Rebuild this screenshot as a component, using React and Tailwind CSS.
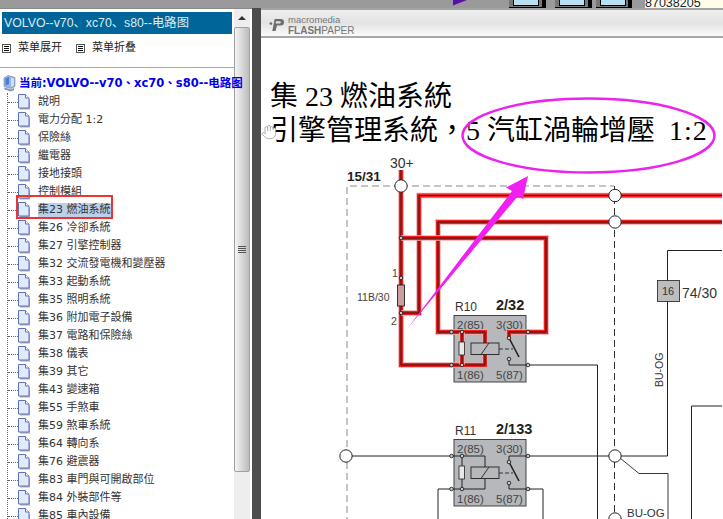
import { Hand } from 'lucide-react';

const treeItems = [
  '說明',
  '電力分配 1:2',
  '保險絲',
  '繼電器',
  '接地接頭',
  '控制模組',
  '集23 燃油系統',
  '集26 冷卻系統',
  '集27 引擎控制器',
  '集32 交流發電機和變壓器',
  '集33 起動系統',
  '集35 照明系統',
  '集36 附加電子設備',
  '集37 電路和保險絲',
  '集38 儀表',
  '集39 其它',
  '集43 變速箱',
  '集55 手煞車',
  '集59 煞車系統',
  '集64 轉向系',
  '集76 避震器',
  '集83 車門與可開啟部位',
  '集84 外裝部件等',
  '集85 車內設備',
];

function MenuIcon() {
  return (
    <svg width="9" height="9" viewBox="0 0 9 9" className="shrink-0">
      <rect x="0.5" y="0.5" width="8" height="8" fill="#fff" stroke="#555" />
      <path d="M2 2.5h5M2 4.5h5M2 6.5h5" stroke="#111" />
    </svg>
  );
}

function DocIcon() {
  return (
    <svg width="13" height="16" viewBox="0 0 13 16" className="shrink-0">
      <path d="M2 2.5h6l4 4v9h-10z" fill="#a9a9b8" />
      <path d="M0.5 0.5h7l3.5 3.5v10h-10.5z" fill="#dfeafc" stroke="#5f74b4" />
      <path d="M7.5 0.5v3.5h3.5" fill="#fff" stroke="#5f74b4" />
    </svg>
  );
}

function ComputerIcon() {
  return (
    <svg width="13" height="17" viewBox="0 0 13 17" className="shrink-0">
      <path d="M1 3l4-2.5 7 2v9l-4 2-7-2z" fill="#9db3dc" stroke="#6b7fa8" strokeWidth="0.6" />
      <path d="M2.5 3.6l3.5-1.6v7l-3.5 1.4z" fill="#3f7fe0" />
      <path d="M8 2.6l3 1v7l-3 1.5z" fill="#d7deea" />
      <path d="M1.5 12.5l6.5 2 3-1.4v2l-3 1.4-6.5-2z" fill="#8890a4" />
    </svg>
  );
}

function Wire({ d }) {
  return (
    <g fill="none" strokeLinejoin="miter">
      <path d={d} stroke="#f7a6a6" strokeWidth="5.5" />
      <path d={d} stroke="#ee2020" strokeWidth="4" />
      <path d={d} stroke="#2a1010" strokeWidth="1" />
    </g>
  );
}

function Node({ x, y, r = 1.8 }) {
  return <circle cx={x} cy={y} r={r} fill="#c9c9c9" stroke="#222" strokeWidth="0.9" />;
}

function BigNode({ x, y }) {
  return <circle cx={x} cy={y} r="6.2" fill="#fff" stroke="#222" strokeWidth="1" />;
}

function Relay({ dy, name, code, hot }) {
  return (
    <g transform={`translate(0 ${dy})`}>
      <rect x="455" y="315.5" width="72" height="66.5" fill="#b6b8bb" stroke="#333" strokeWidth="0.9" />
      <text x="456" y="311" fontSize="12" fill="#333">{name}</text>
      <text x="497" y="310" fontSize="14.5" fontWeight="700" fill="#222">{code}</text>
      <g fontSize="11.5" fill="#444">
        <text x="458" y="328.5">2(85)</text>
        <text x="497" y="328.5">3(30)</text>
        <text x="458" y="379">1(86)</text>
        <text x="497" y="379">5(87)</text>
      </g>
      {hot ? (
        <>
          <Wire d="M453 332H486V365H453" />
          <Wire d="M463 332V365" />
          <Wire d="M529 332H510V338" />
        </>
      ) : (
        <path d="M453 332H486V365H453M463 332V365M529 332H510V338" fill="none" stroke="#222" strokeWidth="1" />
      )}
      <rect x="460" y="342" width="5.5" height="13" fill="#e8e8e8" stroke="#222" strokeWidth="0.8" />
      <rect x="472" y="343" width="28" height="11.5" fill="#b6b8bb" stroke="#222" strokeWidth="0.9" />
      <path d="M482 354.5l8-11.5" stroke="#222" strokeWidth="0.9" />
      <path d="M500 349h14" stroke="#222" strokeWidth="0.9" strokeDasharray="4 2" />
      <path d="M510 338l10 19" stroke="#222" strokeWidth="1.6" />
      <path d="M510 359v6h19" fill="none" stroke="#222" strokeWidth="1" />
      <Node x={452.5} y={332} />
      <Node x={452.5} y={365} />
      <Node x={529} y={332} />
      <Node x={529} y={365} />
      <Node x={463} y={332} />
      <Node x={463} y={365} />
      <Node x={510} y={338} />
      <Node x={510} y={359} />
    </g>
  );
}

function Diagram() {
  return (
    <svg
      width="461"
      height="364"
      viewBox="262 155 461 364"
      className="block shrink-0 [font-family:'Liberation_Sans',sans-serif]"
    >
      <text x="391" y="168" fontSize="14" fill="#333">30+</text>
      <text x="348" y="181" fontSize="13.5" fontWeight="700" fill="#222">15/31</text>

      <path d="M402 186H348V519" fill="none" stroke="#8a8a8a" strokeWidth="1" strokeDasharray="7 4" />
      <path d="M402 186H615" fill="none" stroke="#8a8a8a" strokeWidth="1" strokeDasharray="7 4" />
      <path d="M615.5 186V519" fill="none" stroke="#333" strokeWidth="1" strokeDasharray="7 4" />

      <Wire d="M402 170V365H453" />
      <Wire d="M402 313H420V195.5H723" />
      <Wire d="M453 332H439V222H723" />
      <Wire d="M402 238H547V332H529" />

      <rect x="398.5" y="285" width="7" height="21" fill="#c9a0a0" stroke="#222" strokeWidth="0.9" />
      <Node x={402} y={238} />
      <Node x={402} y={278} />
      <Node x={402} y={313} />
      <text x="393" y="277" fontSize="10.5" fill="#444">1</text>
      <text x="358" y="301" fontSize="10.5" fill="#444">11B/30</text>
      <text x="392" y="325" fontSize="10.5" fill="#444">2</text>

      <path d="M529 365H598.5V519" fill="none" stroke="#222" strokeWidth="1" />
      <path d="M353 456H610" fill="none" stroke="#222" strokeWidth="1" />
      <path d="M622 456H668.5V250.5H723" fill="none" stroke="#222" strokeWidth="1" />
      <path d="M621 458L640 473.5H669V519" fill="none" stroke="#222" strokeWidth="0.9" />
      <path d="M723 406H692.5V519" fill="none" stroke="#222" strokeWidth="1" />
      <path d="M452 489H439V519M529 489H544V519" fill="none" stroke="#222" strokeWidth="1" />

      <Relay dy={0} name="R10" code="2/32" hot />
      <Relay dy={124} name="R11" code="2/133" />

      <BigNode x={402} y={186} />
      <BigNode x={616} y={195.5} />
      <BigNode x={616} y={222} />
      <BigNode x={347} y={456} />
      <BigNode x={616} y={456} />
      <BigNode x={616} y={519} />

      <rect x="658.5" y="280.5" width="22" height="21" fill="#bdbdbd" stroke="#333" strokeWidth="0.9" />
      <text x="663" y="295" fontSize="11" fill="#333">16</text>
      <text x="683" y="298" fontSize="14" fill="#333">74/30</text>
      <text transform="translate(664 387) rotate(-90)" fontSize="10.5" fill="#333">BU-OG</text>
      <text x="628" y="517" fontSize="11.5" fill="#333">BU-OG</text>
    </svg>
  );
}

function LeftPanel() {
  return (
    <div className="w-[252px] shrink-0 flex flex-col border-t border-[#8a8a8a] bg-white overflow-hidden [font-family:'DejaVu_Sans','Noto_Sans_CJK_TC',sans-serif]">
      <div className="flex flex-1 min-h-0">
        <div className="relative z-10 w-[234px] shrink-0">
          <div className="mx-[2px] mt-[3px] h-[22px] bg-[#006699] pl-[2px] text-[12.3px] leading-[22px] text-[#dcebf5] whitespace-nowrap [font-family:'Liberation_Sans','Noto_Sans_CJK_SC',sans-serif]">
            VOLVO--v70、xc70、s80--电路图
          </div>
          <div className="mt-[2px] flex h-[24px] items-center pl-[2px] text-[11px] text-[#222] [font-family:'DejaVu_Sans','Noto_Sans_CJK_SC',sans-serif]">
            <MenuIcon />
            <span className="ml-[7px]">菜单展开</span>
            <span className="ml-[14px]"><MenuIcon /></span>
            <span className="ml-[7px]">菜单折叠</span>
          </div>
          <div className="mt-[7px] h-px bg-[#a8a8a8]" />
          <div className="mt-[6px] flex h-[18px] items-center pl-[3px] whitespace-nowrap text-[11.5px] font-bold leading-[18px] text-[#0000ee]">
            <ComputerIcon />
            <span className="ml-[3px]">当前:VOLVO--v70、xc70、s80--电路图</span>
          </div>
          <ul className="ml-[7px] mt-px border-l border-dotted border-[#666] text-[11px] text-[#333]">
            {treeItems.map((item) => (
              <li key={item} className="flex h-[18px] items-center whitespace-nowrap">
                <span className="w-[10px] shrink-0 border-t border-dotted border-[#666]" />
                <DocIcon />
                {item === '集23 燃油系統' ? (
                  <span className="relative ml-[7px] bg-[#bdd0ea] pr-[2px] leading-[14px]">
                    {item}
                    <span className="absolute left-[-22px] right-0 top-[-8px] bottom-[-2px] border-2 border-[#ee3333]" />
                  </span>
                ) : (
                  <span className="ml-[7px]">{item}</span>
                )}
              </li>
            ))}
          </ul>
        </div>
        <div className="flex w-[16px] shrink-0 flex-col bg-[#eeeeee]">
          <div className="flex h-[18px] shrink-0 items-center justify-center">
            <span className="border-x-[4px] border-b-[4px] border-x-transparent border-b-[#333]" />
          </div>
          <div className="flex h-[445px] shrink-0 items-center justify-center rounded-[2px] border border-[#a0a0a0] bg-gradient-to-r from-[#f5f5f5] via-[#d8d8d8] to-[#bcbcbc]">
            <span className="flex flex-col gap-px">
              <span className="h-px w-[8px] bg-[#555]" />
              <span className="h-px w-[8px] bg-[#555]" />
              <span className="h-px w-[8px] bg-[#555]" />
              <span className="h-px w-[8px] bg-[#555]" />
            </span>
          </div>
        </div>
      </div>
    </div>
  );
}

function Toolbar() {
  return (
    <div className="flex h-[30px] shrink-0 items-center gap-[3px] border-t-2 border-b-2 border-t-[#a4a4a4] border-b-[#a8a8a8] bg-gradient-to-b from-[#efefef] via-[#e3e3e3] to-[#fbfbfb] pl-[7px] pt-[3px]">
      <svg width="17" height="15" viewBox="0 0 16 16" className="shrink-0">
        <circle cx="2" cy="7" r="1.4" fill="#6e6e6e" />
        <path d="M6 2h6.5a3 3 0 0 1 0 7H8.5L7 15H3.5L6 2z" fill="#6e6e6e" />
        <path d="M7.5 4.5L7 6.8h4.5a1.1 1.1 0 0 0 0-2.3z" fill="#e3e3e3" />
      </svg>
      <div className="flex flex-col [font-family:'Liberation_Sans',sans-serif] text-[#777]">
        <span className="text-[9.5px] leading-[11px]">macromedia</span>
        <span className="text-[10px] leading-[11px]">
          <b className="font-bold">FLASH</b>PAPER
        </span>
      </div>
    </div>
  );
}

function RightPanel() {
  return (
    <div className="relative flex min-w-0 flex-1 flex-col overflow-hidden bg-white">
      <Toolbar />
      <div className="pl-[9px] pt-[42px] whitespace-nowrap text-[28px] leading-[34px] text-black [font-family:'Liberation_Serif','Noto_Sans_CJK_TC',serif]">
        <div>集 23 燃油系統</div>
        <div>
          引擎管理系統，5 汽缸渦輪增壓 &nbsp;<span className="tracking-[1px]">1:2</span>
        </div>
      </div>
      <div className="mt-[7px]">
        <Diagram />
      </div>
      <Hand
        size={16}
        strokeWidth={1}
        className="absolute left-0 top-[116px] fill-white text-[#888]"
      />
      {/* arrow and ellipse someone drew over the page */}
      <svg
        width="462"
        height="511"
        viewBox="261 8 462 511"
        className="pointer-events-none absolute left-0 top-0"
      >
        <ellipse cx="588.5" cy="135.5" rx="126" ry="37" fill="none" stroke="#ee22ee" strokeWidth="2.5" />
        <polygon points="528,176 506,187.5 512,191 407,329 518,196 523,199" fill="#f020f0" />
      </svg>
    </div>
  );
}

function TopStrip() {
  return (
    <div className="flex h-[8px] shrink-0 overflow-hidden bg-[#9a9a9a]">
      <svg width="14" height="6" viewBox="0 0 14 6" className="ml-[453px] shrink-0">
        <path d="M0 0h14L0 5.5z" fill="#5a0fa8" />
      </svg>
      {[
        'ml-[42px] w-[37px]',
        'ml-[9px] w-[37px]',
        'ml-[4px] w-[36px]',
      ].map((cls) => (
        <div key={cls} className={`${cls} h-[8px] shrink-0 border-r-[4px] border-b border-[#000] bg-[#777] pl-[4px]`}>
          <div className="h-[6px] w-[26px] border-x border-b border-[#000] bg-[#b8e0f0]" />
        </div>
      ))}
      <div className="ml-[13px] flex-1 overflow-hidden bg-[#fffde8] text-[12.5px] leading-[8px] text-[#223] [font-family:'Liberation_Sans',sans-serif]">
        <div className="mt-[-1px]">87038205</div>
      </div>
    </div>
  );
}

export default function App() {
  return (
    <div className="flex h-[519px] w-[723px] flex-col overflow-hidden bg-white">
      <TopStrip />
      <div className="flex min-h-0 flex-1">
        <LeftPanel />
        <div className="w-[9px] shrink-0 bg-[#4d4d4d]" />
        <RightPanel />
      </div>
    </div>
  );
}
